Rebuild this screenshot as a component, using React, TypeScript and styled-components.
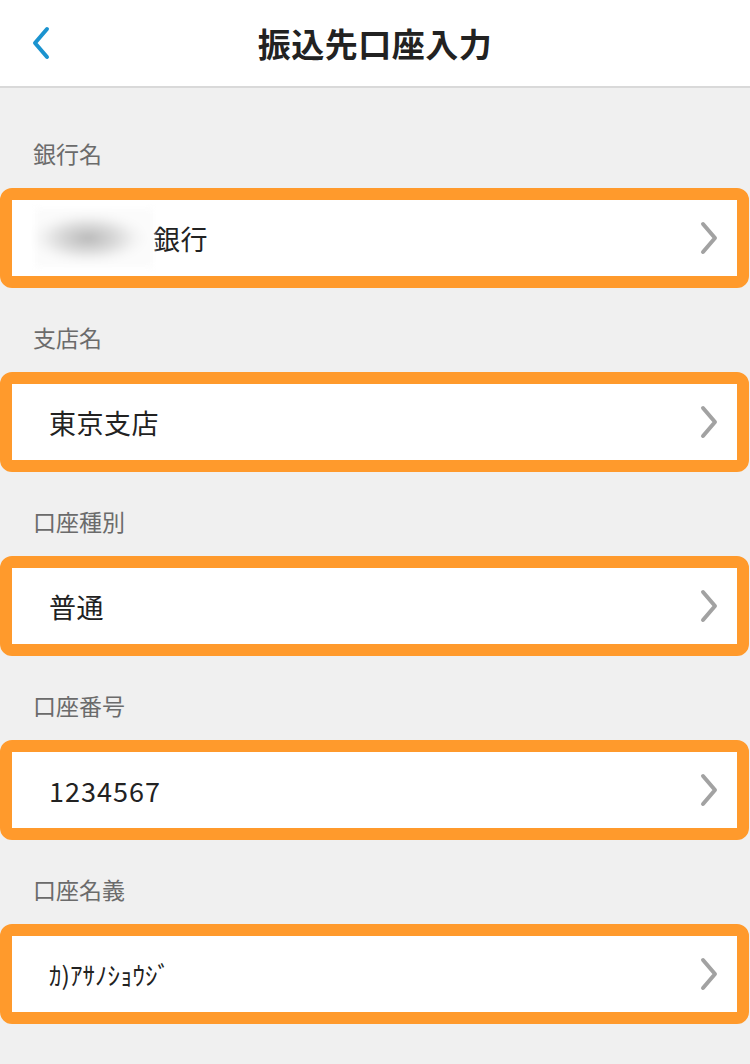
import styled, { createGlobalStyle } from 'styled-components'

const GlobalStyle = createGlobalStyle`
    html, body {
        margin: 0;
        padding: 0;
        background-color: #f0f0f0;
    }
    body {
        font-family: 'Noto Sans CJK JP', 'Noto Sans', sans-serif;
    }
`

const fields = [
    { label: '銀行名', value: '銀行', masked: true },
    { label: '支店名', value: '東京支店' },
    { label: '口座種別', value: '普通' },
    { label: '口座番号', value: '1234567', wide: true },
    { label: '口座名義', value: 'ｶ)ｱｻﾉｼｮｳｼﾞ', small: true },
]

const BackIcon = () => (
    <svg width='24' height='34' viewBox='0 0 24 34'>
        <path d='M18 3 L6 17 L18 31' fill='none' stroke='#1b93cf' strokeWidth='4' strokeLinecap='round' strokeLinejoin='round' />
    </svg>
)

const Chevron = () => (
    <svg width='24' height='34' viewBox='0 0 24 34'>
        <path d='M5 3 L17 17 L5 31' fill='none' stroke='#a2a2a2' strokeWidth='4' strokeLinecap='round' strokeLinejoin='round' />
    </svg>
)

export default function App() {
    return (
        <Page>
            <GlobalStyle />
            <Header>
                <BackButton>
                    <BackIcon />
                </BackButton>
                <Title>振込先口座入力</Title>
            </Header>
            <Form>
                {fields.map((f) => (
                    <Section key={f.label}>
                        <Label>{f.label}</Label>
                        <Field>
                            <Value $small={f.small} $wide={f.wide}>
                                {f.masked && <Masked />}
                                {f.value}
                            </Value>
                            <Chevron />
                        </Field>
                    </Section>
                ))}
            </Form>
        </Page>
    )
}

const Page = styled.div`
    width: 750px;
    min-height: 1064px;
    background-color: #f0f0f0;
`

const Header = styled.header`
    position: relative;
    display: flex;
    align-items: center;
    justify-content: center;
    height: 86px;
    background-color: #fff;
    border-bottom: 2px solid #d9d9d9;
`

const BackButton = styled.div`
    position: absolute;
    left: 29px;
    top: 26px;
    display: flex;
`

const Title = styled.h1`
    margin: 0;
    color: #222;
    font-size: 33px;
    font-weight: 700;
    letter-spacing: 0.5px;
`

const Form = styled.div`
    display: flex;
    flex-direction: column;
    padding-top: 50px;
`

const Section = styled.div`
    display: flex;
    flex-direction: column;
    margin-bottom: 34px;
`

const Label = styled.div`
    height: 30px;
    line-height: 30px;
    padding-left: 33px;
    margin-bottom: 20px;
    color: #6b6b6b;
    font-size: 23px;
`

const Field = styled.div`
    display: flex;
    align-items: center;
    justify-content: space-between;
    box-sizing: border-box;
    width: 749px;
    height: 100px;
    padding: 0 15px 0 37px;
    border: 12px solid #ff9a2c;
    border-radius: 12px;
    background-color: #fff;
`

const Value = styled.div<{ $small?: boolean; $wide?: boolean }>`
    display: flex;
    align-items: center;
    color: #222;
    font-size: ${(p) => (p.$small ? '25px' : '27px')};
    letter-spacing: ${(p) => (p.$small ? '0' : p.$wide ? '1px' : '0.5px')};
`

const Masked = styled.span`
    display: inline-block;
    width: 118px;
    height: 58px;
    margin-left: -14px;
    background: radial-gradient(ellipse 50% 45% at 45% 50%, #b9b9b9 0%, #d8d8d8 45%, #f4f4f4 80%, #fbfbfb 100%);
    filter: blur(3px);
`
